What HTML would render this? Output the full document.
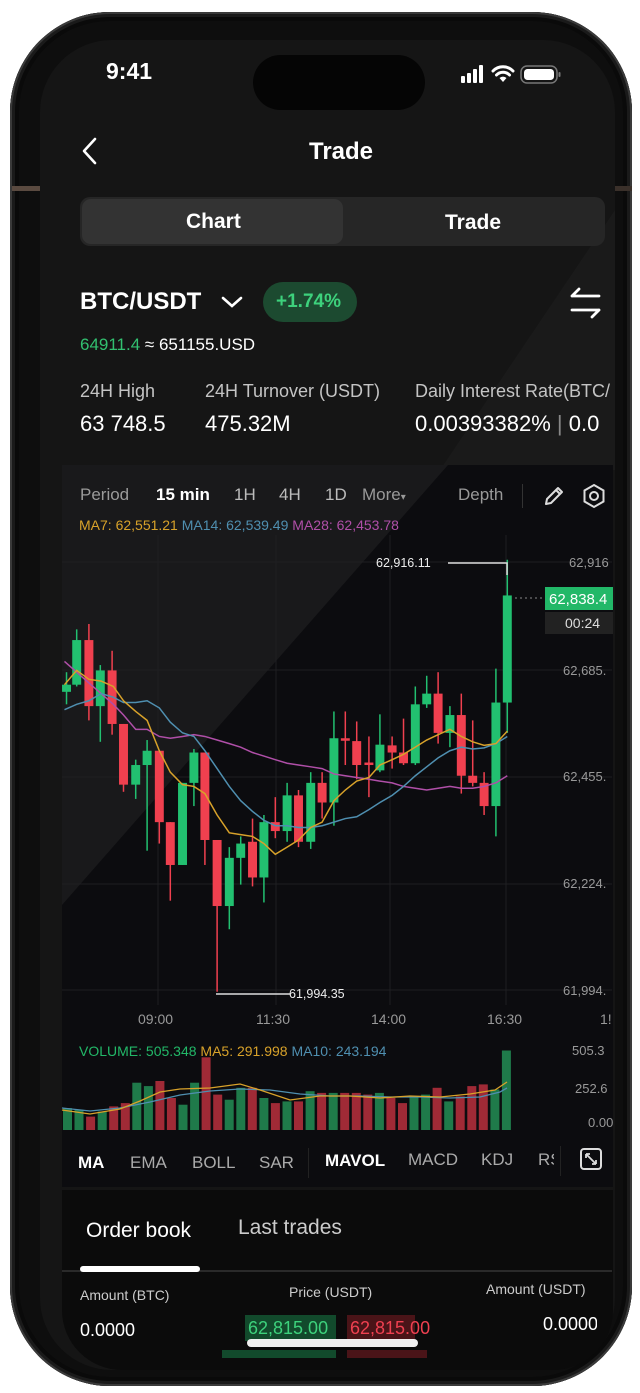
<!DOCTYPE html>
<html><head><meta charset="utf-8"><style>
*{margin:0;padding:0;box-sizing:border-box}
body{width:640px;height:1393px;background:#fff;position:relative;overflow:hidden;font-family:"Liberation Sans",sans-serif;color:#fff}
.a{position:absolute;white-space:nowrap}
.phone{position:absolute;left:10px;top:12px;width:622px;height:1374px;border-radius:100px;background:#0e0e0e;box-shadow:inset 0 0 0 2px #3a3a3a,inset 0 0 0 5px #1a1a1a,inset 0 0 0 9px #0a0a0a}
.screen{position:absolute;left:40px;top:40px;width:575px;height:1330px;border-radius:72px;background:#151515;overflow:hidden}
.btn{position:absolute;left:22px;width:8px;background:#0e0e0e;border-radius:3px}
</style></head><body>
<div class="phone"></div>
<div class="a" style="left:12px;top:186px;width:30px;height:5px;background:#5a4a40"></div>
<div class="a" style="left:612px;top:186px;width:20px;height:5px;background:#3a302a"></div>
<div class="btn" style="top:280px;height:70px"></div>
<div class="btn" style="top:378px;height:80px"></div>
<div class="btn" style="top:512px;height:92px"></div>
<div class="screen">
 <div class="a" style="left:0;top:0;width:575px;height:1330px;background:#1a1a1a;clip-path:polygon(575px 170px,575px 430px,400px 430px)"></div>
</div>
<!-- status bar -->
<div class="a" style="left:253px;top:55px;width:172px;height:55px;border-radius:28px;background:#050505"></div>
<div class="a" style="left:106px;top:58px;font-size:23px;font-weight:bold">9:41</div>
<svg class="a" style="left:460px;top:64px" width="120" height="22">
<rect x="1" y="12" width="4" height="7" rx="1" fill="#fff"/><rect x="7" y="9" width="4" height="10" rx="1" fill="#fff"/><rect x="13" y="5" width="4" height="14" rx="1" fill="#fff"/><rect x="19" y="1" width="4" height="18" rx="1" fill="#fff"/>
<path d="M33 7 A14 14 0 0 1 53 7 M36.5 11 A9 9 0 0 1 49.5 11" stroke="#fff" stroke-width="3" fill="none" stroke-linecap="round"/><path d="M39.5 14 L43 18 L46.5 14 A5 5 0 0 0 39.5 14Z" fill="#fff"/>
<rect x="61" y="2" width="36" height="17" rx="6" fill="none" stroke="#777" stroke-width="1.5"/><rect x="64" y="5" width="30" height="11" rx="3.5" fill="#fff"/><rect x="98.5" y="8" width="2" height="5" rx="1" fill="#777"/>
</svg>
<!-- nav -->
<svg class="a" style="left:80px;top:136px" width="20" height="30"><path d="M15 3 L4 15 L15 27" stroke="#fff" stroke-width="2.6" fill="none" stroke-linecap="round" stroke-linejoin="round"/></svg>
<div class="a" style="left:309px;top:138px;font-size:24px;font-weight:bold">Trade</div>
<div class="a" style="left:80px;top:197px;width:525px;height:49px;border-radius:10px;background:#262626"></div>
<div class="a" style="left:82px;top:199px;width:261px;height:45px;border-radius:9px;background:#333"></div>
<div class="a" style="left:186px;top:210px;font-size:21px;font-weight:bold">Chart</div>
<div class="a" style="left:445px;top:211px;font-size:21px;font-weight:bold">Trade</div>
<div class="a" style="left:80px;top:288px;font-size:24px;font-weight:bold">BTC/USDT</div>
<svg class="a" style="left:220px;top:294px" width="24" height="16"><path d="M3 4 L12 12 L21 4" stroke="#fff" stroke-width="2.6" fill="none" stroke-linecap="round"/></svg>
<div class="a" style="left:263px;top:282px;width:94px;height:40px;border-radius:20px;background:#1c4a30"></div>
<div class="a" style="left:276px;top:291px;font-size:19px;font-weight:bold;color:#3dd17c">+1.74%</div>
<svg class="a" style="left:568px;top:286px" width="36" height="34"><path d="M4 10 H31 M4 10 L11 3 M31 24 H4 M31 24 L24 31" stroke="#fff" stroke-width="2.8" fill="none" stroke-linecap="round" stroke-linejoin="round"/></svg>
<div class="a" style="left:80px;top:335px;font-size:17px;color:#32c070">64911.4 <span style="color:#fff">≈ 651155.USD</span></div>
<div class="a" style="left:80px;top:381px;font-size:18px;color:#c4c4c4">24H High</div>
<div class="a" style="left:205px;top:381px;font-size:18px;color:#c4c4c4">24H Turnover (USDT)</div>
<div class="a" style="left:415px;top:381px;width:198px;overflow:hidden;font-size:18px;color:#c4c4c4">Daily Interest Rate(BTC/</div>
<div class="a" style="left:80px;top:411px;font-size:22px">63 748.5</div>
<div class="a" style="left:205px;top:411px;font-size:22px">475.32M</div>
<div class="a" style="left:415px;top:411px;width:198px;overflow:hidden;font-size:22px">0.00393382% <span style="color:#888">|</span> 0.0</div>
<!-- chart area -->
<div class="a" style="left:62px;top:465px;width:551px;height:722px;background:#0c0c0f"></div>
<div class="a" style="left:62px;top:465px;width:551px;height:722px;background:#19191b;clip-path:polygon(0 0,386px 0,0 440px)"></div>
<div class="a" style="left:80px;top:485px;font-size:17px;color:#9a9a9a">Period</div>
<div class="a" style="left:156px;top:485px;font-size:17px;font-weight:bold">15 min</div>
<div class="a" style="left:234px;top:485px;font-size:17px;color:#bbb">1H</div>
<div class="a" style="left:279px;top:485px;font-size:17px;color:#bbb">4H</div>
<div class="a" style="left:325px;top:485px;font-size:17px;color:#bbb">1D</div>
<div class="a" style="left:362px;top:485px;font-size:17px;color:#999">More<span style="font-size:10px">▾</span></div>
<div class="a" style="left:458px;top:485px;font-size:17px;color:#999">Depth</div>
<div class="a" style="left:522px;top:484px;width:1px;height:24px;background:#333"></div>
<svg class="a" style="left:541px;top:483px" width="26" height="26"><path d="M5 21 L6 16 L17 5 L21 9 L10 20 Z M15 7 L19 11" stroke="#ddd" stroke-width="2" fill="none" stroke-linejoin="round"/></svg>
<svg class="a" style="left:581px;top:483px" width="26" height="26"><path d="M13 2 L22.5 7.5 V18.5 L13 24 L3.5 18.5 V7.5Z" stroke="#ddd" stroke-width="2" fill="none"/><circle cx="13" cy="13" r="4" stroke="#ddd" stroke-width="2" fill="none"/></svg>
<div class="a" style="left:79px;top:517px;font-size:14px"><span style="color:#d8a22a">MA7: 62,551.21</span> <span style="color:#4f8fb0">MA14: 62,539.49</span> <span style="color:#b04fa8">MA28: 62,453.78</span></div>
<svg class="a" style="left:0;top:0" width="640" height="1393">
<g stroke="#1e1e22" stroke-width="1">
<line x1="62" y1="562" x2="612" y2="562"/><line x1="62" y1="670" x2="612" y2="670"/><line x1="62" y1="777" x2="612" y2="777"/><line x1="62" y1="884" x2="612" y2="884"/><line x1="62" y1="990" x2="612" y2="990"/>
<line x1="158" y1="535" x2="158" y2="1005"/><line x1="276" y1="535" x2="276" y2="1005"/><line x1="390" y1="535" x2="390" y2="1005"/><line x1="506" y1="535" x2="506" y2="1005"/>
</g>
<g transform="matrix(0.407,0,0,0.357,1.4,458)">
<g id="c"></g>
<path vector-effect="non-scaling-stroke" fill="none" stroke="#b04fa8" stroke-width="1.5" d="M155,570 185,600 215,630 245,660 275,690 300,720 330,760 358,760 388,780 415,785 445,780 473,775 500,780 530,790 560,800 588,810 617,825 645,835 673,845 702,855 730,860 760,865 788,870 817,885 845,890 873,895 903,900 930,905 960,910 988,920 1017,925 1045,930 1073,925 1102,920 1130,925 1158,925 1186,920 1215,910 1243,890"/>
<path vector-effect="non-scaling-stroke" fill="none" stroke="#4f8fb0" stroke-width="1.5" d="M155,705 185,690 215,680 245,660 275,670 300,685 330,685 358,680 388,700 415,740 445,770 473,780 500,820 530,870 560,920 588,960 617,990 645,1015 673,1030 702,1030 730,1035 760,1035 788,1030 817,1020 845,1010 873,1005 903,985 930,965 960,945 988,920 1017,890 1045,865 1073,840 1102,820 1130,810 1158,815 1186,812 1215,800 1243,780"/>
<path vector-effect="non-scaling-stroke" fill="none" stroke="#d8a22a" stroke-width="1.5" d="M155,635 185,595 215,620 245,625 275,640 300,680 330,710 358,735 388,820 415,880 445,915 473,920 500,940 530,1000 560,1050 588,1055 617,1060 645,1080 673,1110 702,1090 730,1070 760,1035 788,1020 817,960 845,930 873,905 903,895 930,860 960,845 988,830 1017,810 1045,790 1073,775 1102,760 1130,780 1158,795 1186,805 1215,800 1243,765"/>
</g>
<g fill="none" stroke="#ddd" stroke-width="1.5"><path d="M448 563 H507 V575"/><path d="M216 994 H290"/></g>
<line x1="515" y1="598" x2="546" y2="598" stroke="#888" stroke-dasharray="2 3"/>
<g fill="#ededed" font-size="12.5" font-family="Liberation Sans"><text x="376" y="567">62,916.11</text><text x="289" y="998">61,994.35</text></g>
<g fill="#999" font-size="13" font-family="Liberation Sans">
<text x="569" y="567">62,916</text><text x="563" y="675">62,685.</text><text x="563" y="781">62,455.</text><text x="563" y="888">62,224.</text><text x="563" y="995">61,994.</text>
<text x="138" y="1024" font-size="14">09:00</text><text x="256" y="1024" font-size="14">11:30</text><text x="371" y="1024" font-size="14">14:00</text><text x="487" y="1024" font-size="14">16:30</text><text x="600" y="1024" font-size="14">1!</text>
<text x="572" y="1055">505.3</text><text x="575" y="1093">252.6</text><text x="588" y="1127">0.00</text>
</g>
<rect x="545" y="587" width="68" height="23" fill="#22b868"/><text x="549" y="604" font-size="15" fill="#fff" font-family="Liberation Sans">62,838.4</text>
<rect x="545" y="612" width="68" height="22" fill="#222"/><text x="565" y="628" font-size="14" fill="#ddd" font-family="Liberation Sans">00:24</text>
<g id="v"></g>
<path fill="none" stroke="#4f8fb0" stroke-width="1.3" d="M62 1108 L90 1111 L120 1108 L150 1102 L180 1095 L210 1091 L240 1089 L270 1090 L300 1094 L330 1096 L360 1096 L390 1097 L420 1097 L450 1098 L480 1097 L500 1092 L507 1088"/>
<path fill="none" stroke="#d8a22a" stroke-width="1.3" d="M62 1110 L90 1114 L120 1109 L140 1101 L160 1092 L180 1089 L210 1088 L240 1084 L260 1090 L290 1100 L320 1096 L350 1096 L380 1098 L410 1096 L440 1097 L470 1094 L495 1090 L507 1082"/>
</svg>
<div class="a" style="left:79px;top:1043px;font-size:14px"><span style="color:#22b868">VOLUME: 505.348</span> <span style="color:#d8a22a">MA5: 291.998</span> <span style="color:#4f8fb0">MA10: 243.194</span></div>
<div class="a" style="left:62px;top:1135px;width:551px;height:52px;background:#0c0c0f"></div>
<div class="a" style="left:78px;top:1153px;font-size:17px;font-weight:bold">MA</div>
<div class="a" style="left:130px;top:1153px;font-size:17px;color:#aaa">EMA</div>
<div class="a" style="left:192px;top:1153px;font-size:17px;color:#aaa">BOLL</div>
<div class="a" style="left:259px;top:1153px;font-size:17px;color:#aaa">SAR</div>
<div class="a" style="left:308px;top:1148px;width:1px;height:30px;background:#222"></div>
<div class="a" style="left:325px;top:1151px;font-size:17px;font-weight:bold">MAVOL</div>
<div class="a" style="left:408px;top:1150px;font-size:17px;color:#aaa">MACD</div>
<div class="a" style="left:481px;top:1150px;font-size:17px;color:#aaa">KDJ</div>
<div class="a" style="left:538px;top:1150px;width:16px;overflow:hidden;font-size:17px;color:#aaa">RSI</div>
<div class="a" style="left:560px;top:1146px;width:1px;height:30px;background:#222"></div>
<svg class="a" style="left:579px;top:1147px" width="24" height="24"><rect x="2" y="2" width="20" height="20" rx="3" stroke="#ddd" stroke-width="2" fill="none"/><path d="M7 7 L12 12 M7 7 V11 M7 7 H11 M17 17 L12 12 M17 17 V13 M17 17 H13" stroke="#ddd" stroke-width="1.8" fill="none"/></svg>
<!-- order book -->
<div class="a" style="left:62px;top:1190px;width:551px;height:180px;background:#0b0b0b;border-bottom-left-radius:60px;border-bottom-right-radius:60px"></div>
<div class="a" style="left:86px;top:1219px;font-size:21px">Order book</div>
<div class="a" style="left:238px;top:1216px;font-size:21px;color:#ccc">Last trades</div>
<div class="a" style="left:62px;top:1270px;width:550px;height:2px;background:#2a2a2a"></div>
<div class="a" style="left:80px;top:1266px;width:120px;height:6px;border-radius:3px;background:#fff"></div>
<div class="a" style="left:80px;top:1287px;font-size:14px;color:#ccc">Amount (BTC)</div>
<div class="a" style="left:289px;top:1284px;font-size:14px;color:#ccc">Price (USDT)</div>
<div class="a" style="left:486px;top:1281px;font-size:14px;color:#ccc">Amount (USDT)</div>
<div class="a" style="left:80px;top:1320px;font-size:18px">0.0000</div>
<div class="a" style="left:543px;top:1314px;width:54px;overflow:hidden;font-size:18px">0.0000</div>
<div class="a" style="left:245px;top:1315px;width:91px;height:26px;background:#124a2c"></div>
<div class="a" style="left:248px;top:1318px;font-size:18px;color:#3dd17c">62,815.00</div>
<div class="a" style="left:347px;top:1315px;width:68px;height:26px;background:#4a1418"></div>
<div class="a" style="left:350px;top:1318px;font-size:18px;color:#ef4050">62,815.00</div>
<div class="a" style="left:222px;top:1350px;width:114px;height:8px;background:#124a2c"></div>
<div class="a" style="left:347px;top:1350px;width:80px;height:8px;background:#4a1418"></div>
<div class="a" style="left:247px;top:1339px;width:171px;height:8px;border-radius:4px;background:#f0f0f0"></div>
<script>
var C=[[160,635,655,600,690,1],[185,510,635,480,640,1],[215,510,695,465,735,0],[243,595,695,580,795,1],[272,595,745,540,775,0],[300,745,915,745,935,0],[330,860,915,845,955,1],[358,820,860,790,1100,1],[388,820,1020,820,1080,0],[415,1020,1140,1020,1240,0],[445,910,1140,910,1140,1],[473,825,910,815,975,1],[500,825,1070,825,1140,0],[530,1070,1255,1070,1495,0],[560,1120,1255,1090,1320,1],[588,1080,1120,1060,1195,1],[617,1075,1175,1010,1200,0],[645,1020,1175,1000,1245,1],[673,1020,1045,950,1065,0],[702,945,1045,910,1075,1],[730,945,1075,930,1090,0],[760,910,1075,880,1095,1],[788,910,965,880,1010,0],[817,785,965,710,1030,1],[845,785,792,710,860,0],[873,793,860,738,900,0],[903,853,860,780,950,0],[930,803,875,718,880,1],[960,805,825,780,870,0],[988,825,855,730,860,0],[1017,690,855,640,860,1],[1045,660,690,610,700,1],[1073,660,770,600,800,0],[1102,720,770,695,810,1],[1130,720,890,660,940,0],[1158,890,910,735,920,0],[1186,910,975,880,1000,0],[1215,685,975,590,1060,1],[1243,385,685,285,770,1]];
var s='';C.forEach(function(c){var col=c[5]?'#22c070':'#f0404f';s+='<line x1="'+c[0]+'" x2="'+c[0]+'" y1="'+c[3]+'" y2="'+c[4]+'" stroke="'+col+'" stroke-width="1.5" vector-effect="non-scaling-stroke"/><rect x="'+(c[0]-11)+'" y="'+c[1]+'" width="22" height="'+Math.max(c[2]-c[1],4)+'" fill="'+col+'"/>';});
document.getElementById('c').innerHTML=s;
var V=[260,265,285,270,255,245,185,195,180,230,250,185,110,220,235,200,200,230,245,240,240,210,215,215,215,215,220,215,230,245,225,220,200,240,225,195,190,205,90];
var t='';V.forEach(function(h,i){var x=63+i*11.55;var y=1020+h/2.95;var col=C[i][5]?'#1f7a4a':'#a02a36';t+='<rect x="'+x.toFixed(1)+'" y="'+y.toFixed(1)+'" width="9" height="'+(1130-y).toFixed(1)+'" fill="'+col+'"/>';});
document.getElementById('v').innerHTML=t;
</script>
</body></html>
